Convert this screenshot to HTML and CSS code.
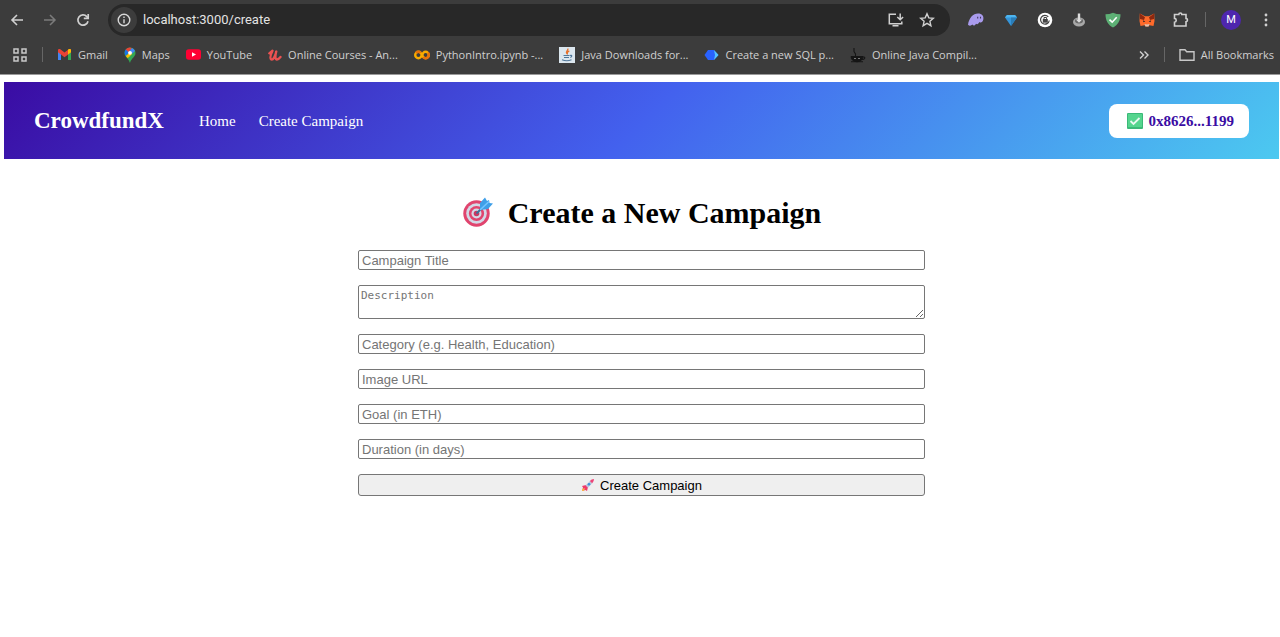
FILE: index.html
```html
<!DOCTYPE html>
<html lang="en">
<head>
<meta charset="utf-8">
<title>CrowdfundX</title>
<link rel="stylesheet" href="styles.css">
</head>
<body>
<header class="browser">
  <div class="toolbar">
    <button class="icon-btn" aria-label="Back"><svg width="16" height="16" viewBox="0 0 16 16" fill="none" stroke="#d0d0d0" stroke-width="1.6"><path d="M14 8H3M8 3L3 8l5 5"/></svg></button>
    <button class="icon-btn" aria-label="Forward"><svg width="16" height="16" viewBox="0 0 16 16" fill="none" stroke="#7b7b7b" stroke-width="1.5"><path d="M2 8h11M8 3l5 5-5 5"/></svg></button>
    <button class="icon-btn" aria-label="Reload"><svg width="16" height="16" viewBox="0 0 16 16" fill="none" stroke="#d0d0d0" stroke-width="1.7"><path d="M13 9.2A5.1 5.1 0 1 1 11.8 4.6L13 5.9"/><path d="M13.2 2v4.4H8.8"/></svg></button>
    <div class="omnibox">
      <button class="site-info" aria-label="Site information"><svg width="14" height="14" viewBox="0 0 14 14" fill="none" stroke="#d8d8d8" stroke-width="1.4"><circle cx="7" cy="7" r="5.8"/><path d="M7 6.2v4M7 3.6V5"/></svg></button>
      <input class="address" type="text" aria-label="Address" value="localhost:3000/create">
      <button class="icon-btn" aria-label="Install app"><svg width="18" height="16" viewBox="0 0 18 16" fill="none" stroke="#d0d0d0" stroke-width="1.5"><path d="M9 2.2H2.3v9.6h12.5V9.4M5.5 13.8h6M13.2 1.5v6M10.3 5l2.9 2.8L16.1 5"/></svg></button>
      <button class="icon-btn" aria-label="Bookmark this tab"><svg width="16" height="16" viewBox="0 0 16 16" fill="none" stroke="#d0d0d0" stroke-width="1.4"><path d="M8 1.8l1.8 4.1 4.5.4-3.4 3 1 4.4L8 11.4l-3.900 2.300 1-4.400-3.400-3 4.500-.4z"/></svg></button>
    </div>
    <div class="extensions">
      <button class="icon-btn" aria-label="Wallet extension"><svg width="18" height="16" viewBox="0 0 18 16"><path d="M1 12.800C2 6 6 1.500 11 1.500c4 0 6 2.500 5.300 6-.5 2.700-2.500 3.700-4.100 2.500-.6 2-2 2.700-3.200 1.800-1 2.100-2.600 2.400-3.600.8-1.300 1.300-3 1.600-4.400.2z" fill="#a99bed"/><path d="M10.700 4.800v1.700M13.500 4.800v1.700" stroke="#41385f" stroke-width="1.100"/></svg></button>
      <button class="icon-btn" aria-label="Gem extension"><svg width="16" height="16" viewBox="0 0 16 16"><path d="M4 3h8l2 2.500L8 14 2 5.500z" fill="#3596db"/><path d="M2 5.500h12L12 3H4z" fill="#4db5f0"/><path d="M8 5.500V14l6-8.500z" fill="#2a7db8"/></svg></button>
      <button class="icon-btn" aria-label="Lock extension"><svg width="16" height="16" viewBox="0 0 16 16"><circle cx="8" cy="8" r="7.300" fill="#fff"/><path d="M11.300 4.900A4.400 4.400 0 1 0 12.300 8.500" fill="none" stroke="#444" stroke-width="1.200"/><path d="M5.800 7h5v3.700h-5z" fill="#444"/><path d="M7 7V5.500h2.600V7" fill="none" stroke="#444"/></svg></button>
      <button class="icon-btn" aria-label="Download extension"><svg width="16" height="16" viewBox="0 0 16 16"><ellipse cx="8" cy="10" rx="6" ry="4.600" fill="#a8a8a8"/><ellipse cx="8" cy="9" rx="4" ry="2.400" fill="#686868"/><path d="M6.800 1.500h2.400v6h2L8 10.700 4.800 7.500h2z" fill="#ddd"/></svg></button>
      <button class="icon-btn" aria-label="Shield extension"><svg width="16" height="16" viewBox="0 0 16 16"><path d="M.5 2.300Q4.500 2.300 8 .8q3.500 1.500 7.500 1.500C15.500 8.500 13 13 8 15.500 3 13 .5 8.500.5 2.300z" fill="#5db075"/><path d="M4.500 7.600l2.700 2.600 4.500-5" fill="none" stroke="#fff" stroke-width="1.600"/></svg></button>
      <button class="icon-btn" aria-label="MetaMask"><svg width="16" height="16" viewBox="0 0 16 16"><path d="M.8 1.500L6 4.300h4l5.200-2.800L15.500 9l-1 5-4-.8-1 1.300h-3l-1-1.300-4 .8-1-5z" fill="#ff6a2a"/><path d="M.8 1.500L6 5.200 5 8 1 7zM15.200 1.500L10 5.200 11 8l4-1z" fill="#8d2810"/><path d="M3.800 8.300l2.500 1.200-1.800.8zM12.200 8.300L9.700 9.500l1.800.8z" fill="#25242b"/><path d="M5.500 12l1 2.500h3l1-2.500L8 12.500z" fill="#d7c3b5"/></svg></button>
      <button class="icon-btn" aria-label="Extensions"><svg width="16" height="16" viewBox="0 0 16 16" fill="none" stroke="#d0d0d0" stroke-width="1.600"><path d="M1.500 2.500h4.300c0-2 3-2 3 0H13v4c2 0 2 3.200 0 3.200V14H1.500v-3.800c2.300-.2 2.300-3.600 0-3.800z"/></svg></button>
      <span class="divider"></span>
      <button class="avatar" aria-label="Profile">M</button>
      <button class="icon-btn" aria-label="Browser menu"><svg width="16" height="16" viewBox="0 0 16 16" fill="#d0d0d0"><circle cx="8" cy="3" r="1.400"/><circle cx="8" cy="8" r="1.400"/><circle cx="8" cy="13" r="1.400"/></svg></button>
    </div>
  </div>
  <nav class="bookmarks" aria-label="Bookmarks">
    <button class="icon-btn" aria-label="Apps"><svg width="16" height="16" viewBox="0 0 16 16" fill="none" stroke="#c8c8c8" stroke-width="1.500"><path d="M2 2h4v4H2zM10 2h4v4h-4zM2 10h4v4H2zM10 10h4v4h-4z"/></svg></button>
    <span class="divider"></span>
    <div class="bookmark-list">
      <a class="bookmark" href="#"><svg width="15" height="15" viewBox="0 0 15 15"><path d="M1 3.500V13h3V6z" fill="#4285f4"/><path d="M14 3.500V13h-3V6z" fill="#34a853"/><path d="M1 3.200C1 1.800 2.500 1.700 3.300 2.300l4.200 3.300 4.200-3.300c.8-.6 2.300-.5 2.300.9v2l-6.500 5L1 5.200z" fill="#ea4335"/><path d="M11 2.800l.7-.5c.8-.6 2.300-.5 2.300.9v2L11 7.500z" fill="#fbbc04"/></svg>Gmail</a>
      <a class="bookmark" href="#"><svg width="12" height="16" viewBox="0 0 12 16"><path d="M6 .5A5.500 5.500 0 0 1 11.500 6C11.500 10 7 11.500 6.200 15.500h-.6C5 11.500.5 10 .5 6A5.500 5.500 0 0 1 6 .5z" fill="#34a853"/><path d="M1.700 2.600A5.500 5.500 0 0 1 8 .9L4 6z" fill="#ea4335"/><path d="M8 .9a5.500 5.500 0 0 1 3 3L7.800 7 5 4.500z" fill="#4285f4"/><path d="M1.700 2.600C.3 4.500.2 7 1.800 9L5 5.500z" fill="#1a73e8"/><path d="M1.800 9L7 4.500 8 7l-4.300 4.300z" fill="#fbbc04"/><circle cx="6" cy="5.800" r="1.900" fill="#fff"/></svg>Maps</a>
      <a class="bookmark" href="#"><svg width="15" height="15" viewBox="0 0 15 15"><rect y="2.300" width="15" height="10.500" rx="2.800" fill="#ff0033"/><path d="M6 5.300v4.500l4-2.250z" fill="#fff"/></svg>YouTube</a>
      <a class="bookmark" href="#"><svg width="14" height="14" viewBox="0 0 14 14" fill="none" stroke="#ec5252" stroke-width="2.300" stroke-linecap="round" stroke-linejoin="round"><path d="M1.300 5.300L4.500 2.700Q1 10 3.300 11.500C5.500 12 7.500 7 8.300 3.500 7 8 7 11.500 9 11.500q1.500 0 3.500-2.500"/></svg>Online Courses - An...</a>
      <a class="bookmark" href="#"><svg width="16" height="14" viewBox="0 0 16 14" fill="none" stroke-width="2.400"><circle cx="4.400" cy="7" r="3.200" stroke="#f9ab00"/><circle cx="11.600" cy="7" r="3.200" stroke="#f9ab00"/><path d="M9.200 9.200a3.200 3.200 0 0 0 4.700-4.500M2.100 4.800A3.200 3.200 0 0 1 6.700 4.800" stroke="#e8710a"/></svg>PythonIntro.ipynb -...</a>
      <a class="bookmark" href="#"><svg width="16" height="16" viewBox="0 0 16 16"><path d="M0 0h16v16H0z" fill="#dbe6ee"/><path d="M8.800 1.500c1 2-2.800 2.700-1 5M10.300 3.800C7.500 5 8.700 6 8.200 7.500" fill="none" stroke="#e76f28" stroke-width="1.300"/><path d="M4.500 8.500h6M5 10.500h5M3 12.800c2.500 1 7 1 9.500 0M11 8.500c2-.8 2.500 1 .3 2" fill="none" stroke="#507799" stroke-width="1.200"/></svg>Java Downloads for...</a>
      <a class="bookmark" href="#"><svg width="15" height="14" viewBox="0 0 15 14"><path d="M4 2h6l4.500 5L10 12H4L.5 7z" fill="#2962ff"/><path d="M10 2l4.500 5L10 12l1-5z" fill="#55c3ff"/></svg>Create a new SQL p...</a>
      <a class="bookmark" href="#"><svg width="16" height="16" viewBox="0 0 16 16" fill="none" stroke="#151515"><path d="M4 1v3.500L5.500 7v2" stroke-width="1.100"/><path d="M1 9.500c0 7 12 7 12 0z" fill="#151515"/><path d="M13 10c3-.5 2 3-1.500 2.500M1 14.700h12" stroke-width="1.100"/><path d="M4 11.500h2M8 11.500h2" stroke="#777"/></svg>Online Java Compil...</a>
    </div>
    <button class="icon-btn" aria-label="More bookmarks"><svg width="12" height="12" viewBox="0 0 12 12" fill="none" stroke="#d0d0d0" stroke-width="1.400"><path d="M2 2.500L5.500 6 2 9.500M6.500 2.500L10 6 6.500 9.500"/></svg></button>
    <span class="divider"></span>
    <a class="bookmark all" href="#"><svg width="16" height="14" viewBox="0 0 16 14" fill="none" stroke="#c8c8c8" stroke-width="1.400"><path d="M1 1.700h5l1.700 2H15v8.600H1z"/></svg>All Bookmarks</a>
  </nav>
</header>
<div class="page">
  <nav class="navbar">
    <div class="brand">CrowdfundX</div>
    <a class="nav-link" href="#">Home</a>
    <a class="nav-link" href="#">Create Campaign</a>
    <button class="wallet"><svg width="16" height="16" viewBox="0 0 16 16"><rect width="16" height="16" rx="1" fill="#3bb978"/><rect x="1" y="1" width="14" height="13" fill="#55d58e"/><path d="M3.500 8l3 3 6-6" fill="none" stroke="#e9f8f0" stroke-width="1.800"/></svg>0x8626...1199</button>
  </nav>
  <main class="create">
    <h1 class="title"><svg width="32" height="32" viewBox="0 0 32 32"><circle cx="14.500" cy="16.500" r="13.200" fill="#e0446e"/><circle cx="14.500" cy="16.500" r="10.300" fill="#d3d8e6"/><circle cx="14.500" cy="16.500" r="7.600" fill="#e0446e"/><circle cx="14.500" cy="16.500" r="5" fill="#d3d8e6"/><circle cx="14.500" cy="16.500" r="2.800" fill="#c93763"/><path d="M14.500 16.500L24 7" stroke="#39739b" stroke-width="2"/><path d="M18 13V6l5-5.500L25 4l2-1 .5 3 3.500.5L26 12z" fill="#3f9fe8"/><path d="M18 13L27 4.500" stroke="#74c6ff" stroke-width="1.500"/></svg>Create a New Campaign</h1>
    <form class="form">
      <input class="field" type="text" placeholder="Campaign Title" aria-label="Campaign Title">
      <textarea class="field area" placeholder="Description" aria-label="Description"></textarea>
      <input class="field" type="text" placeholder="Category (e.g. Health, Education)" aria-label="Category">
      <input class="field" type="text" placeholder="Image URL" aria-label="Image URL">
      <input class="field" type="text" placeholder="Goal (in ETH)" aria-label="Goal (in ETH)">
      <input class="field" type="text" placeholder="Duration (in days)" aria-label="Duration (in days)">
      <button class="submit" type="button"><svg width="14" height="14" viewBox="0 0 14 14"><path d="M1 8l4-1 2 2-1 4-1.500-1L1 13l1-3.500z" fill="#f0386b"/><path d="M1 11l3-1-1 3H1z" fill="#f9b04c"/><path d="M4.500 7.500L9 3l2.300 2L7 9.700z" fill="#b8c5da"/><circle cx="8" cy="6.300" r="1.300" fill="#3c91dc"/><path d="M8.800 3Q10.500 1 13 1q0 2.500-1.800 4.300z" fill="#ed4578"/></svg>Create Campaign</button>
    </form>
  </main>
</div>
</body>
</html>
```
FILE: styles.css
```css
* { box-sizing: border-box; }
body {
  margin: 0;
  background: #fff;
  font-family: "Liberation Serif", "Times New Roman", serif;
  color: #000;
}
svg { display: block; flex: none; }
button { cursor: pointer; }
a { color: inherit; text-decoration: none; }

/* Browser bar */
.browser {
  background: #3c3c3c;
  border-bottom: 1px solid #9a9a9a;
  font-family: "Open Sans", "Noto Sans", sans-serif;
  color: #d0d0d0;
}
.toolbar {
  display: flex;
  align-items: center;
  height: 39px;
  padding: 0 6px 0 9px;
  gap: 17px;
}
.icon-btn {
  display: flex;
  flex: none;
  padding: 0;
  border: 0;
  background: none;
}
.omnibox {
  display: flex;
  flex: 1;
  align-items: center;
  gap: 14px;
  height: 32px;
  padding: 0 15px 0 3px;
  border-radius: 16px;
  background: #282828;
}
.site-info {
  display: flex;
  align-items: center;
  justify-content: center;
  width: 26px;
  height: 26px;
  padding: 0;
  border: 0;
  border-radius: 50%;
  background: #3c3c3c;
}
.address {
  flex: 1;
  min-width: 0;
  margin-left: -8px;
  padding: 0;
  border: 0;
  background: none;
  color: #e3e3e3;
  font: 13px Roboto, "Open Sans", sans-serif;
}
.extensions {
  display: flex;
  align-items: center;
  gap: 18px;
}
.divider {
  flex: none;
  width: 1px;
  height: 15px;
  background: #666;
}
.extensions .divider { margin: 0 -2px; }
.avatar {
  width: 20px;
  height: 20px;
  margin: 0 -1px;
  padding: 0;
  border: 0;
  border-radius: 50%;
  background: #4e26ae;
  color: #fff;
  font: 11px Roboto, sans-serif;
}
.bookmarks {
  display: flex;
  align-items: center;
  gap: 14px;
  height: 35px;
  padding: 0 6px 4px 12px;
}
.bookmark-list {
  display: flex;
  flex: 1;
  gap: 16px;
}
.bookmark {
  display: flex;
  align-items: center;
  gap: 6px;
  font-size: 11px;
  line-height: 16px;
  white-space: nowrap;
}

/* Page */
.page { padding: 7px 1px 0 4px; }
.navbar {
  display: flex;
  align-items: center;
  gap: 23px;
  padding: 22px 30px 21px;
  background: linear-gradient(135deg, #3a0ca3, #4361ee, #4cc9f0);
  color: #fff;
}
.brand {
  margin-right: 12px;
  font-size: 23px;
  font-weight: bold;
}
.nav-link { font-size: 15px; }
.wallet {
  display: flex;
  align-items: center;
  gap: 6px;
  margin-left: auto;
  padding: 8px 15px 8px 18px;
  border: 0;
  border-radius: 8px;
  background: #fff;
  color: #3a0ca3;
  font: bold 15px/18px "Liberation Serif", serif;
}
.create {
  max-width: 567px;
  margin: 0 auto;
  padding-top: 36px;
}
.title {
  display: flex;
  align-items: center;
  justify-content: center;
  gap: 14px;
  margin: 0 0 19px;
  font-size: 30px;
  line-height: 36px;
}
.form {
  display: flex;
  flex-direction: column;
  gap: 15px;
}
.field {
  width: 100%;
  height: 20px;
  padding: 1px 3px;
  border: 1px solid #767676;
  border-radius: 2px;
  background: #fff;
  font: 13px "Liberation Sans", Arial, sans-serif;
}
.field::placeholder { color: #757575; }
.area {
  height: 34px;
  padding: 2px;
  font: 11px/16px "DejaVu Sans Mono", monospace;
  resize: vertical;
}
.submit {
  display: flex;
  align-items: center;
  justify-content: center;
  gap: 5px;
  height: 22px;
  padding: 0;
  border: 1px solid #767676;
  border-radius: 3px;
  background: #efefef;
  color: #000;
  font: 13px "Liberation Sans", Arial, sans-serif;
}
```
